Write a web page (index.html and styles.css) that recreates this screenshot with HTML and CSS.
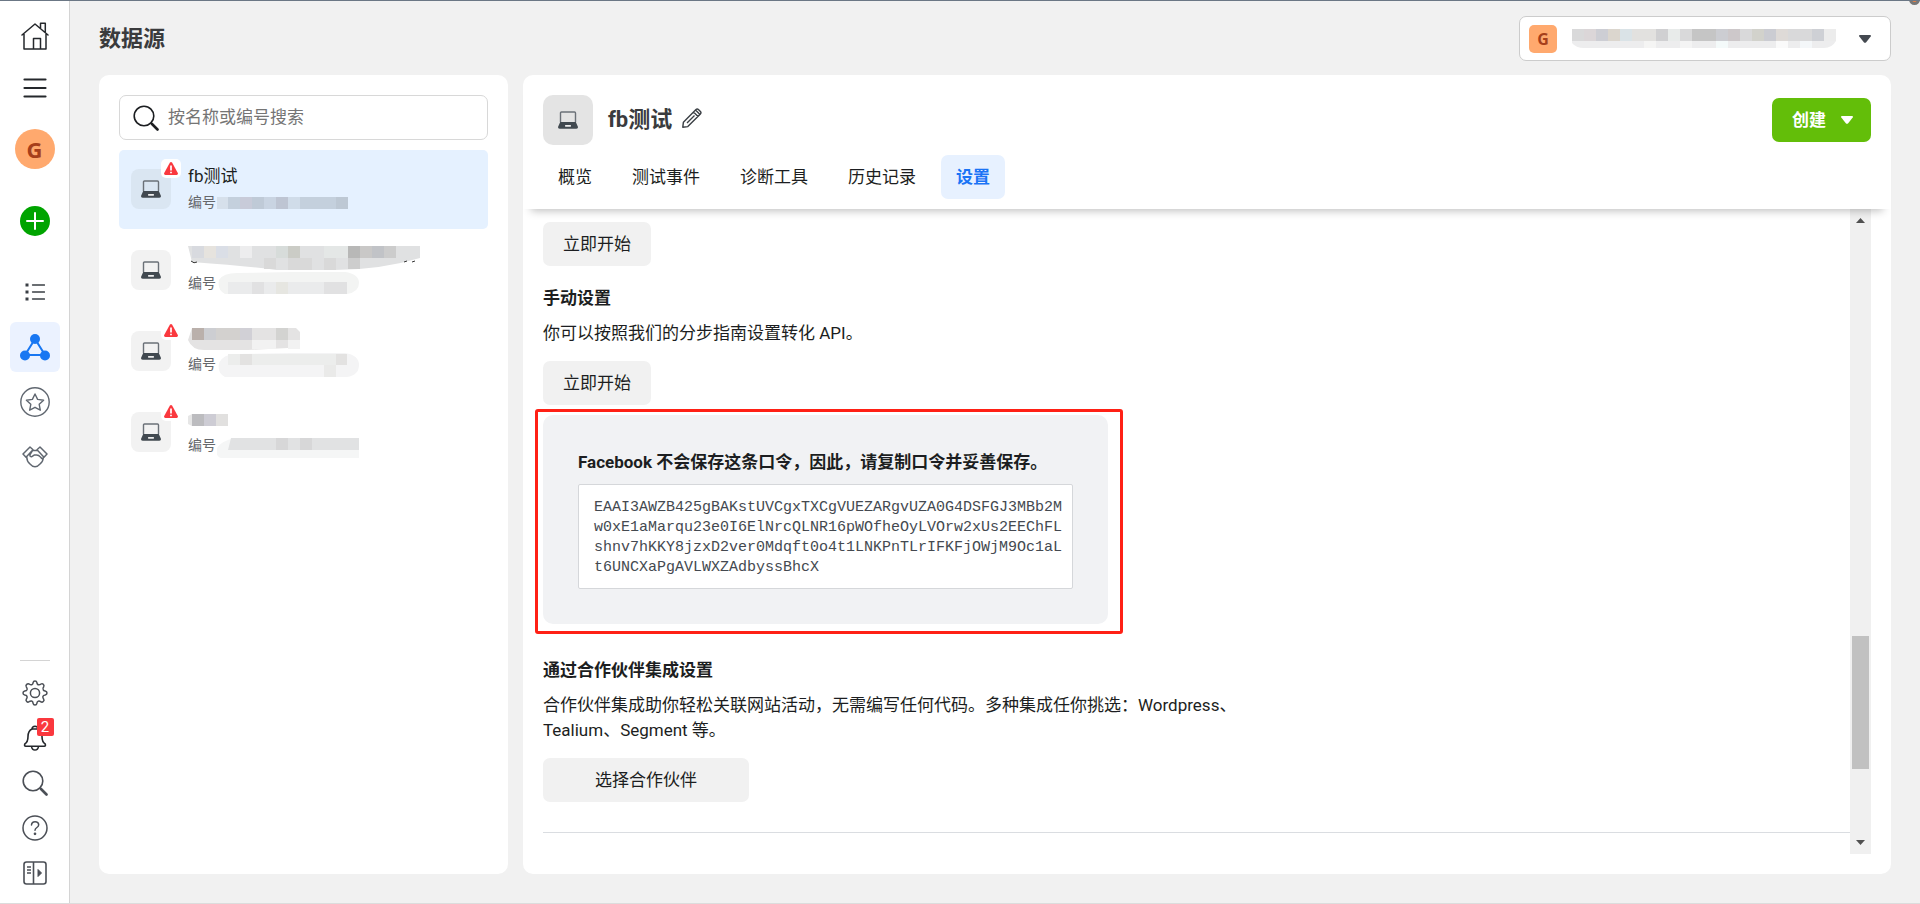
FILE: index.html
```html
<!DOCTYPE html>
<html lang="zh-CN">
<head>
<meta charset="utf-8">
<title>数据源</title>
<link rel="stylesheet" href="styles.css">
</head>
<body>
<svg class="defs" width="0" height="0" aria-hidden="true">
  <symbol id="laptop" viewBox="0 0 20 18">
    <path d="M2.500 11V2q0-1 1-1h13q1 0 1 1v9" fill="none" stroke="#6b7178" stroke-width="1.400"/>
    <path d="M2.200 11h15.600l2 4.500q.4 2.300-1.800 2.300H2q-2.200 0-1.800-2.300z" fill="#414950"/>
    <rect x="7" y="14" width="6" height="1.700" rx=".6" fill="#eee"/>
  </symbol>
  <symbol id="warn" viewBox="0 0 14 13">
    <path d="M5.800.8q1.200-1.600 2.400 0L13.800 11q.6 1.800-1.200 2H1.400q-1.800-.2-1.200-2z" fill="#fa383e"/>
    <path d="M7 3.500v5M7 9.700v1.600" stroke="#fff" stroke-width="1.700"/>
  </symbol>
  <symbol id="magnifier" viewBox="0 0 26 26">
    <circle cx="11" cy="11" r="9.800" fill="none" stroke="currentColor" stroke-width="1.600"/>
    <path d="M17.800 17.800l1.600 1.600" stroke="currentColor" stroke-width="1.600"/>
    <path d="M19 19l5.500 5.500" stroke="currentColor" stroke-width="2.600" stroke-linecap="round"/>
  </symbol>
  <symbol id="caret" viewBox="0 0 12 8">
    <path d="M1 0h10q1.500.3.700 1.600L7.200 7.300q-1.200 1-2.400 0L.3 1.600Q-.5.3 1 0z" fill="currentColor"/>
  </symbol>
</svg>

<div class="page">
  <nav class="rail" aria-label="主导航">
    <div class="rail-top">
      <a class="rail-item ink" href="#" aria-label="首页">
        <svg width="28" height="28" viewBox="0 0 28 28" fill="none" stroke="currentColor" stroke-width="1.500" stroke-linejoin="round" stroke-linecap="round"><path d="M1 13L14 2l13 11M3 12v15h22V12M12.500 27V16.500h7V27M19.500 6V1.200h4.800V10"/></svg>
      </a>
      <button class="rail-item ink" aria-label="菜单">
        <svg width="24" height="22" viewBox="0 0 24 22" fill="none" stroke="currentColor" stroke-width="2.200" stroke-linecap="round"><path d="M1.500 2.500h21M1.500 11h21M1.500 19.500h21"/></svg>
      </button>
      <a class="avatar" href="#">G</a>
      <button class="add" aria-label="新建">
        <svg width="30" height="30" viewBox="0 0 30 30"><circle cx="15" cy="15" r="15" fill="#00a400"/><path d="M15 7v16M7 15h16" stroke="#fff" stroke-width="2" stroke-linecap="round"/></svg>
      </button>
      <a class="rail-item" href="#" aria-label="列表">
        <svg width="20" height="20" viewBox="0 0 20 20" stroke="#3a3f44" fill="#3a3f44"><path d="M7.500 3H19.500M7.500 10H19.500M7.500 17H19.500" stroke-width="1.300" stroke-linecap="round"/><rect x="1" y="2" width="2" height="2"/><rect x="1" y="9" width="2" height="2"/><rect x="1" y="16" width="2" height="2"/></svg>
      </a>
      <a class="rail-item active" href="#" aria-label="数据源">
        <svg width="30" height="28" viewBox="0 0 30 28" fill="#1877f2"><path d="M15 6L5 22h20z" fill="none" stroke="#1877f2" stroke-width="2"/><circle cx="15" cy="6" r="5"/><circle cx="5" cy="22.500" r="5"/><circle cx="25" cy="22.500" r="5"/></svg>
      </a>
      <a class="rail-item" href="#" aria-label="收藏">
        <svg width="30" height="30" viewBox="0 0 30 30" fill="none" stroke="#606770" stroke-width="1.400" stroke-linejoin="round"><circle cx="15" cy="15" r="14.200"/><path d="M15 7l2.600 5.400 6 .8-4.400 4.100 1.100 5.900-5.300-2.900-5.300 2.900 1.100-5.900-4.400-4.100 6-.8z"/></svg>
      </a>
      <a class="rail-item" href="#" aria-label="合作">
        <svg width="26" height="22" viewBox="0 0 26 22" fill="none" stroke="#606770" stroke-width="1.500" stroke-linejoin="round" stroke-linecap="round"><path d="M1 8L8 1l3 2.700L4 11.200zM25 8L18 1l-3 2.700 7 7.500zM10.500 4.500h5M4.800 10.500Q4.500 15 8 18q2.500 2.800 5 2.800t5-2.800q3.500-3 3.300-7.300M10.500 4.500L8 8.500q-.5 2.300 1.800 2.200l2.700-1.800h2q2.300 0 4 2.200l1.200 1.400"/></svg>
      </a>
    </div>
    <div class="rail-bottom">
      <a class="tool" href="#" aria-label="设置">
        <svg width="26" height="26" viewBox="0 0 26 26" fill="none" stroke="currentColor" stroke-width="1.500" stroke-linejoin="round"><circle cx="13" cy="13" r="4.600"/><path d="M13 1q1.600 0 1.900 1.600.3 2.200 2.100 2.200 1 0 2-.8 1.200-.8 2.300.3t.4 2.400q-1.500 1.900-.4 3.300.7.900 1.900 1Q25 11.400 25 13t-1.800 2q-2 .2-2.300 1.500-.3 1.200.8 2.700.8 1.200-.4 2.300t-2.400.3q-1.800-1.300-3-.5-.9.500-1 2Q14.600 25 13 25t-1.900-1.700q-.2-1.900-1.400-2.300-1.100-.4-2.600.7-1.300.9-2.400-.2t-.4-2.300q1.200-1.600.7-2.800-.5-1.100-2.200-1.300Q1 14.700 1 13t1.700-2q2-.2 2.400-1.500.3-1.100-.8-2.700-.8-1.300.4-2.400t2.400-.4q1.700 1.200 2.900.6 1-.5 1.100-2Q11.400 1 13 1z"/></svg>
      </a>
      <a class="tool ink" href="#" aria-label="通知">
        <svg width="24" height="26" viewBox="0 0 24 26" fill="none" stroke="currentColor" stroke-width="1.600" stroke-linejoin="round"><path d="M9 4q.2-2.800 3-2.800T15 4M9 4h6M9 4Q5 6 5 11.500T1.800 19q-.8 2 1 2.200h18.400q1.800-.2 1-2.200Q19 17 19 11.500T15 4M8.500 21.500q.5 3.500 3.500 3.500t3.500-3.500"/></svg>
        <span class="count">2</span>
      </a>
      <button class="tool" aria-label="搜索"><svg width="26" height="26"><use href="#magnifier"/></svg></button>
      <a class="tool" href="#" aria-label="帮助">
        <svg width="26" height="26" viewBox="0 0 26 26" fill="none" stroke="currentColor" stroke-width="1.500" stroke-linecap="round"><circle cx="13" cy="13" r="12"/><path d="M9.500 10q.2-3.300 3.600-3.300t3.600 3q0 1.600-1.800 2.800T13 15.200"/><circle cx="13" cy="18.800" r=".6" fill="currentColor"/></svg>
      </a>
      <button class="tool" aria-label="展开">
        <svg width="24" height="24" viewBox="0 0 24 24" fill="none" stroke="currentColor" stroke-width="1.600"><rect x="1" y="1" width="22" height="22" rx="2.500"/><path d="M10.500 1v22M4 6h4M4 9h4M4 12h4"/><path d="M15 8.500v7l3.500-3.500z" fill="currentColor" stroke-width="1"/></svg>
      </button>
    </div>
  </nav>

  <main class="main">
    <header class="topbar">
      <h1>数据源</h1>
      <button class="account" aria-label="选择帐户">
        <span class="account-logo">G</span>
        <svg class="account-name" width="264" height="20" viewBox="0 0 264 20">
          <clipPath id="acc"><path d="M0 0h264v12q-4 7-12 7H12Q4 19 0 14z"/></clipPath>
          <g clip-path="url(#acc)">
            <rect width="264" height="12" fill="#d9d9da"/><rect y="12" width="264" height="8" fill="#ededee"/>
            <rect x="12" width="12" height="12" fill="#dbd6d8"/><rect x="24" width="12" height="12" fill="#cdced4"/><rect x="36" width="12" height="12" fill="#dbd6ce"/><rect x="48" width="12" height="12" fill="#dae3e7"/><rect x="60" width="24" height="12" fill="#e2e1df"/><rect x="84" width="12" height="12" fill="#d0d0d2"/><rect x="96" width="12" height="12" fill="#e8ebea"/><rect x="120" width="24" height="12" fill="#c5c5c5"/><rect x="144" width="12" height="12" fill="#cccdd2"/><rect x="156" width="12" height="12" fill="#cdc8ca"/><rect x="180" width="12" height="12" fill="#d2d2cc"/><rect x="192" width="12" height="12" fill="#cbccd2"/><rect x="204" width="12" height="12" fill="#dedad7"/><rect x="240" width="12" height="12" fill="#ced0d5"/><rect x="252" width="12" height="12" fill="#ececec"/>
            <rect x="72" y="12" width="12" height="8" fill="#f5f5f4"/><rect x="108" y="12" width="12" height="8" fill="#f4f4f4"/><rect x="144" y="12" width="12" height="8" fill="#f4fafa"/><rect x="204" y="12" width="12" height="8" fill="#fafafa"/><rect x="228" y="12" width="12" height="8" fill="#f4f7f9"/>
          </g>
        </svg>
        <svg class="account-caret" width="12" height="8"><use href="#caret"/></svg>
      </button>
    </header>

    <div class="columns">
      <section class="card sources">
        <label class="search">
          <svg width="26" height="26"><use href="#magnifier"/></svg>
          <input type="search" placeholder="按名称或编号搜索" aria-label="按名称或编号搜索">
        </label>
        <ul class="source-list">
          <li class="source selected">
            <span class="thumb"><svg width="20" height="18"><use href="#laptop"/></svg><span class="alert"><svg width="14" height="13"><use href="#warn"/></svg></span></span>
            <span class="source-text">
              <span class="source-name">fb测试</span>
              <span class="source-id">编号<svg width="131" height="24" viewBox="0 0 131 24"><g><rect y="6" width="11" height="12" fill="#d6e0eb"/><rect x="11" y="6" width="120" height="12" fill="#c4d0dd"/><rect x="23" y="6" width="12" height="12" fill="#c8cbd9"/><rect x="35" y="6" width="12" height="12" fill="#bfcad7"/><rect x="47" y="6" width="12" height="12" fill="#c9d4e2"/><rect x="59" y="6" width="12" height="12" fill="#bec5d3"/><rect x="71" y="6" width="12" height="12" fill="#d0dce9"/><rect x="119" y="6" width="12" height="12" fill="#bdc8d4"/></g></svg></span>
            </span>
          </li>
          <li class="source">
            <span class="thumb"><svg width="20" height="18"><use href="#laptop"/></svg></span>
            <span class="source-text">
              <span class="source-name"><svg width="232" height="24" viewBox="0 0 232 24"><path d="M0 0h232v12q-40 12-86 12H88Q60 20 4 16z" fill="#e0e1e2"/><path d="M4 0h12v12H4z" fill="#d8dadf"/><path d="M16 0h12v12H16z" fill="#e6e3de"/><path d="M28 0h12v12H28z" fill="#dadee6"/><path d="M52 0h12v12H52z" fill="#ededee"/><path d="M88 0h12v12H88z" fill="#d7dcda"/><path d="M100 0h12v12h-12z" fill="#cbccc6"/><path d="M136 0h24v12h-24z" fill="#e4e7e6"/><path d="M160 0h12v12h-12z" fill="#b8b8b7"/><path d="M172 0h12v12h-12z" fill="#c9c8c7"/><path d="M184 0h12v12h-12z" fill="#c1c3c7"/><path d="M196 0h12v12h-12z" fill="#ccc"/><path d="M160 12h12v11h-12z" fill="#cdcdcd"/><path d="M76 12h12v11H76zM100 12h24v12h-24z" fill="#d9d9d9"/><path d="M136 12h12v12h-12z" fill="#d9d9d9"/><path d="M3 15q3 3 6 1M216 16l3-1M224 16l3-1" stroke="#333" fill="none"/></svg></span>
              <span class="source-id">编号<svg width="142" height="24" viewBox="0 0 142 24"><path d="M2 8Q6 1 20 1L76 0h52q14 2 14 11t-12 11H8q-8-4-6-14z" fill="#f3f4f3"/><path d="M11 10h119v12H11z" fill="#eaebec"/><path d="M35 10h12v12H35zM107 10h23v12h-23z" fill="#e1e1e2"/><path d="M59 10h12v12H59z" fill="#e6e6e1"/></svg></span>
            </span>
          </li>
          <li class="source">
            <span class="thumb"><svg width="20" height="18"><use href="#laptop"/></svg><span class="alert"><svg width="14" height="13"><use href="#warn"/></svg></span></span>
            <span class="source-text">
              <span class="source-name"><svg width="112" height="22" viewBox="0 0 112 22"><path d="M4 0h104l4 4v10q-4 6-12 6L60 22H16Q4 22 0 12z" fill="#e4e3e3"/><path d="M4 0h12v12H4z" fill="#bab0ab"/><path d="M16 0h12v12H16z" fill="#cdced2"/><path d="M28 0h36v12H28z" fill="#d3d1cf"/><path d="M52 0h12v12H52z" fill="#d1d0d6"/><path d="M88 0h12v12H88z" fill="#d3d3d1"/><path d="M64 12h24v9H64zM100 12h12v9h-12z" fill="#f2f2f2"/></svg></span>
              <span class="source-id">编号<svg width="142" height="24" viewBox="0 0 142 24"><path d="M2 10Q6 1 20 1L76 0h52q14 2 14 12t-12 12H8q-8-4-6-14z" fill="#f4f4f5"/><path d="M11 1h119v11H11z" fill="#ecedec"/><path d="M23 1h12v11H23zM119 1h11v11h-11z" fill="#e3e2e1"/><path d="M107 12h12v12h-12z" fill="#eaeae9"/></svg></span>
            </span>
          </li>
          <li class="source">
            <span class="thumb"><svg width="20" height="18"><use href="#laptop"/></svg><span class="alert"><svg width="14" height="13"><use href="#warn"/></svg></span></span>
            <span class="source-text">
              <span class="source-name"><svg width="40" height="12" viewBox="0 0 40 12"><path d="M0 2l4-2v12l-4-2z" fill="#e6e6e6"/><path d="M4 0h12v12H4z" fill="#bcbcbf"/><path d="M16 0h12v12H16z" fill="#cdccd4"/><path d="M28 0h12v12H28z" fill="#e1e0df"/></svg></span>
              <span class="source-id">编号<svg width="142" height="24" viewBox="0 0 142 24"><path d="M0 14Q4 7 18 4h124v20H6Q-2 24 0 14z" fill="#f5f6f6"/><path d="M14 4h128v12H11z" fill="#e1e2e3"/><path d="M59 4h12v12H59zM83 4h12v12H83z" fill="#d7d7d8"/></svg></span>
            </span>
          </li>
        </ul>
      </section>

      <section class="card detail">
        <header class="detail-head">
          <div class="title-row">
            <span class="detail-icon"><svg width="20" height="18"><use href="#laptop"/></svg></span>
            <h2>fb测试</h2>
            <button class="edit" aria-label="编辑名称">
              <svg width="20" height="20" viewBox="0 0 20 20" fill="none" stroke="#3a3f44" stroke-width="1.400" stroke-linejoin="round"><path d="M.8 19.200l.6-5L14 1.600q1.200-1.200 2.400 0l2 2q1.200 1.200 0 2.400L5.800 18.600zM11.500 4l4.500 4.500M13.500 2l4.500 4.500M5 15l7.500-7.500"/></svg>
            </button>
            <button class="create">创建<svg width="12" height="8"><use href="#caret"/></svg></button>
          </div>
          <nav class="tabs">
            <a href="#">概览</a>
            <a href="#">测试事件</a>
            <a href="#">诊断工具</a>
            <a href="#">历史记录</a>
            <a href="#" class="current">设置</a>
          </nav>
        </header>
        <div class="scroll-area">
          <div class="content">
            <button class="action">立即开始</button>
            <h3>手动设置</h3>
            <p>你可以按照我们的分步指南设置转化 API。</p>
            <button class="action">立即开始</button>
            <div class="token">
              <h4>Facebook 不会保存这条口令，因此，请复制口令并妥善保存。</h4>
              <code>EAAI3AWZB425gBAKstUVCgxTXCgVUEZARgvUZA0G4DSFGJ3MBb2Mw0xE1aMarqu23e0I6ElNrcQLNR16pWOfheOyLVOrw2xUs2EEChFLshnv7hKKY8jzxD2ver0Mdqft0o4t1LNKPnTLrIFKFjOWjM9Oc1aLt6UNCXaPgAVLWXZAdbyssBhcX</code>
              <span class="highlight"></span>
            </div>
            <h3>通过合作伙伴集成设置</h3>
            <p>合作伙伴集成助你轻松关联网站活动，无需编写任何代码。多种集成任你挑选：Wordpress、Tealium、Segment 等。</p>
            <button class="action wide">选择合作伙伴</button>
            <hr>
          </div>
          <div class="scrollbar" aria-hidden="true">
            <svg width="9" height="5" viewBox="0 0 9 5"><path d="M0 5L4.500 0 9 5z" fill="#505050"/></svg>
            <div class="track"><div class="handle"></div></div>
            <svg width="9" height="5" viewBox="0 0 9 5"><path d="M0 0l4.500 5L9 0z" fill="#505050"/></svg>
          </div>
        </div>
      </section>
    </div>
  </main>
  <span class="corner-dot"></span>
</div>
</body>
</html>
```
FILE: styles.css
```css
* {
  box-sizing: border-box;
}

body {
  margin: 0;
  background: #f1f1f1;
  color: #1c1e21;
  font-family: Roboto, "Noto Sans CJK SC", sans-serif;
  font-size: 17px;
  line-height: 25px;
}

button {
  border: 0;
  padding: 0;
  background: none;
  color: inherit;
  font: inherit;
  cursor: pointer;
}

a {
  color: inherit;
  text-decoration: none;
}

svg {
  display: block;
  flex: none;
}

h1, h2, h3, h4, p, ul {
  margin: 0;
  padding: 0;
}

.defs {
  position: absolute;
}

.page {
  position: relative;
  display: flex;
  height: 100vh;
  min-height: 860px;
  overflow: hidden;
  border-top: 1px solid #6b7785;
  border-bottom: 1px solid #dcdcdc;
}

/* Navigation rail */
.rail {
  flex: none;
  display: flex;
  flex-direction: column;
  justify-content: space-between;
  width: 70px;
  padding: 10px 0 8px;
  background: #fff;
  border-right: 1px solid #d4d4d4;
  color: #4b4f56;
}

.rail-top {
  display: flex;
  flex-direction: column;
  align-items: center;
  gap: 5px;
}

.rail-item {
  display: flex;
  align-items: center;
  justify-content: center;
  width: 50px;
  height: 50px;
  border-radius: 6px;
}

.rail-item.active {
  background: #ebf2ff;
}

.ink {
  color: #25282c;
}

button.rail-item {
  height: 44px;
}

.avatar {
  width: 40px;
  margin-top: 14px;
  border-radius: 50%;
  background: #ffa96e;
  color: #a63f1b;
  font: 700 22px/40px "Open Sans", sans-serif;
  text-align: center;
}

.add {
  margin: 32px 0 26px;
}

.rail-bottom {
  display: flex;
  flex-direction: column;
  align-items: center;
}

.rail-bottom::before {
  content: "";
  width: 30px;
  height: 1px;
  margin-bottom: 9px;
  background: #d4d4d4;
}

.tool {
  position: relative;
  display: flex;
  align-items: center;
  justify-content: center;
  width: 68px;
  height: 45px;
}

.count {
  position: absolute;
  top: 3px;
  left: 36px;
  width: 17px;
  border-radius: 2px;
  background: #fa383e;
  color: #fff;
  font-size: 15px;
  line-height: 18px;
  text-align: center;
}

/* Page frame */
.main {
  flex: 1;
  min-width: 0;
  display: flex;
  flex-direction: column;
  padding: 0 29px 29px;
}

.topbar {
  display: flex;
  justify-content: space-between;
  align-items: center;
  padding: 15px 0 14px;
}

h1, h2 {
  color: #3a3b3d;
  font-size: 22px;
  line-height: 30px;
}

.account {
  display: flex;
  align-items: center;
  height: 45px;
  padding: 0 19px 0 9px;
  border: 1px solid #ccc;
  border-radius: 7px;
  background: #fff;
}

.account-logo {
  width: 28px;
  border-radius: 5px;
  background: #ffa96e;
  color: #a63f1b;
  font: 700 16px/28px "Open Sans", sans-serif;
}

.account-name {
  margin: 0 23px 0 15px;
}

.account-caret {
  color: #444950;
}

.columns {
  flex: 1;
  min-height: 0;
  display: flex;
  gap: 15px;
}

.card {
  background: #fff;
  border-radius: 10px;
}

/* Data source list */
.sources {
  flex: none;
  width: 409px;
  padding: 20px;
}

.search {
  display: flex;
  align-items: center;
  gap: 9px;
  height: 45px;
  padding: 0 13px;
  border: 1px solid #d8d8d8;
  border-radius: 7px;
}

.search input {
  flex: 1;
  min-width: 0;
  border: 0;
  padding: 0;
  outline: none;
  background: none;
  font: inherit;
}

.search input::placeholder {
  color: #757575;
}

.source-list {
  display: flex;
  flex-direction: column;
  gap: 2px;
  margin-top: 10px;
  list-style: none;
}

.source {
  display: flex;
  align-items: center;
  gap: 17px;
  height: 79px;
  padding: 0 0 2px 12px;
  border-radius: 5px;
}

.source.selected {
  background: #e5f1ff;
}

.thumb {
  position: relative;
  display: flex;
  align-items: center;
  justify-content: center;
  width: 40px;
  height: 40px;
  border-radius: 8px;
  background: #f2f2f2;
}

.selected .thumb {
  background: #dae6f2;
}

.alert {
  position: absolute;
  top: -10px;
  right: -10px;
  display: flex;
  padding: 3px;
  border-radius: 5px;
  background: #fff;
}

.source-text {
  display: flex;
  flex-direction: column;
}

.source-name {
  display: flex;
  align-items: center;
  height: 28px;
}

.source-id {
  display: flex;
  align-items: center;
  gap: 1px;
  height: 24px;
  color: #65676b;
  font-size: 14px;
}

/* Detail panel */
.detail {
  flex: 1;
  min-width: 0;
  display: flex;
  flex-direction: column;
  padding-bottom: 20px;
}

.detail-head {
  position: relative;
  padding: 20px 20px 10px;
  border-radius: 10px 10px 0 0;
  box-shadow: 0 10px 8px -8px #00000040;
}

.title-row {
  display: flex;
  align-items: center;
}

.detail-icon {
  display: flex;
  align-items: center;
  justify-content: center;
  width: 50px;
  height: 50px;
  margin-right: 15px;
  border-radius: 10px;
  background: #e4e4e4;
}

.edit {
  margin: 0 auto 4px 10px;
}

.create {
  display: flex;
  align-items: center;
  gap: 15px;
  height: 44px;
  padding: 0 18px 0 20px;
  border-radius: 7px;
  background: #63be09;
  color: #fff;
  font-weight: 700;
}

.tabs {
  display: flex;
  gap: 10px;
  margin-top: 10px;
}

.tabs a {
  padding: 0 15px;
  border-radius: 7px;
  line-height: 44px;
}

.tabs .current {
  background: #e7f1ff;
  color: #1b74f5;
  font-weight: 700;
}

.scroll-area {
  flex: 1;
  min-height: 0;
  display: flex;
  padding-right: 20px;
}

.content {
  flex: 1;
  min-width: 0;
  overflow: hidden;
  padding: 13px 0 0 20px;
}

.action {
  display: block;
  height: 44px;
  padding: 0 20px;
  border-radius: 7px;
  background: #f1f1f1;
}

.action.wide {
  padding: 0 52px;
}

h3 {
  margin: 20px 0 10px;
  font-size: 17px;
}

.content p {
  max-width: 720px;
  margin-bottom: 15px;
}

.token {
  position: relative;
  width: 565px;
  margin-top: 10px;
  padding: 35px;
  border-radius: 10px;
  background: #f1f2f4;
}

.token h4 {
  font-size: 17px;
}

.token code {
  display: block;
  margin-top: 9px;
  padding: 13px 9px 10px 15px;
  border: 1px solid #d5d7da;
  border-radius: 2px;
  background: #fff;
  color: #444950;
  font: 15px/20px "Liberation Mono", monospace;
  word-break: break-all;
}

.highlight {
  position: absolute;
  inset: -6px -15px -10px -8px;
  border: 3px solid #ff2015;
  border-radius: 3px;
}

.token + h3 {
  margin-top: 34px;
}

hr {
  height: 1px;
  margin: 30px 0 0;
  border: 0;
  background: #dadde1;
}

.scrollbar {
  display: flex;
  flex-direction: column;
  align-items: center;
  width: 21px;
  padding: 9px 2px;
  background: #f0f0f0;
}

.track {
  flex: 1;
  width: 17px;
  padding-top: 413px;
}

.handle {
  height: 133px;
  background: #c1c1c1;
}

.corner-dot {
  position: absolute;
  top: -7px;
  right: 0;
  width: 11px;
  height: 11px;
  border: 3px solid #777;
  border-radius: 50%;
  background: #f08040;
}
```
